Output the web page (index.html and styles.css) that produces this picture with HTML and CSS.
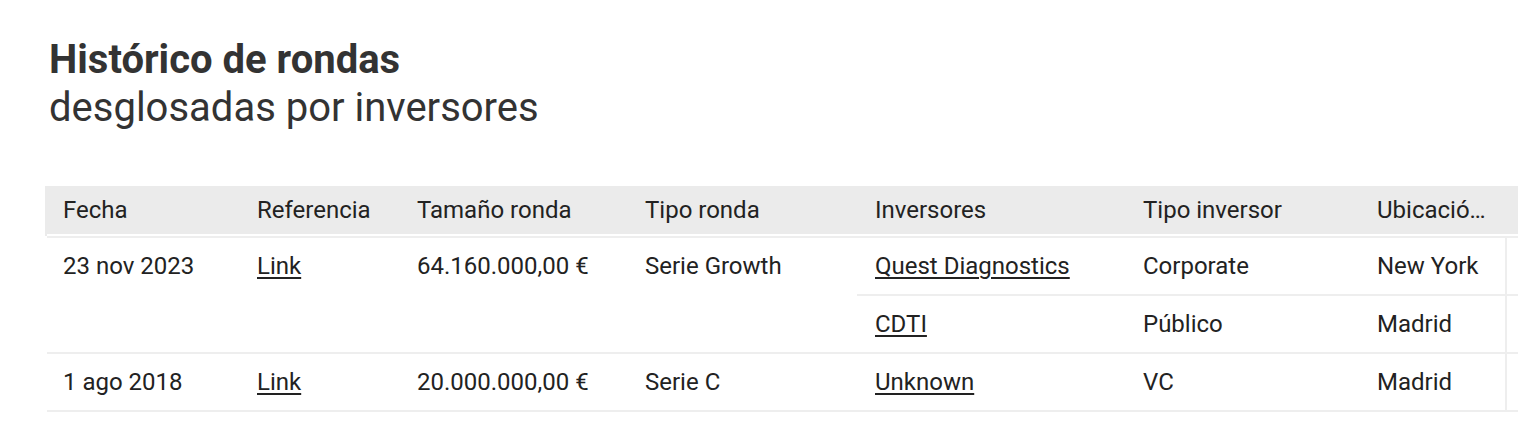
FILE: index.html
```html
<!DOCTYPE html>
<html lang="es">
<head>
<meta charset="utf-8">
<title>Histórico de rondas</title>
<link rel="stylesheet" href="styles.css">
</head>
<body>
<main class="page">
  <header class="heading">
    <h1 class="title">Histórico de rondas</h1>
    <p class="subtitle">desglosadas por inversores</p>
  </header>
  <div class="grid-wrap">
    <table class="rounds">
      <colgroup>
        <col class="c-fecha"><col class="c-ref"><col class="c-size"><col class="c-type"><col class="c-inv"><col class="c-invtype"><col class="c-loc"><col class="c-extra">
      </colgroup>
      <thead>
        <tr>
          <th class="first">Fecha</th>
          <th>Referencia</th>
          <th>Tamaño ronda</th>
          <th>Tipo ronda</th>
          <th>Inversores</th>
          <th>Tipo inversor</th>
          <th><div class="clip" title="Ubicación inversor">Ubicación inversor</div></th>
          <th></th>
        </tr>
      </thead>
      <tbody>
        <tr class="top">
          <td class="first span" rowspan="2">23 nov 2023</td>
          <td class="span" rowspan="2"><a href="#">Link</a></td>
          <td class="span" rowspan="2">64.160.000,00 €</td>
          <td class="span" rowspan="2">Serie Growth</td>
          <td><a href="#">Quest Diagnostics</a></td>
          <td>Corporate</td>
          <td class="loc">New York</td>
          <td></td>
        </tr>
        <tr>
          <td><a href="#">CDTI</a></td>
          <td>Público</td>
          <td class="loc">Madrid</td>
          <td></td>
        </tr>
        <tr>
          <td class="first">1 ago 2018</td>
          <td><a href="#">Link</a></td>
          <td>20.000.000,00 €</td>
          <td>Serie C</td>
          <td><a href="#">Unknown</a></td>
          <td>VC</td>
          <td class="loc">Madrid</td>
          <td></td>
        </tr>
      </tbody>
    </table>
  </div>
</main>
</body>
</html>
```

FILE: styles.css
```css
html, body {
  margin: 0;
  padding: 0;
  background: #ffffff;
  overflow: hidden;
}

.page {
  font-family: Roboto, "Liberation Sans", Arial, sans-serif;
  color: #333333;
  padding-top: 36px;
}

.heading {
  padding-left: 49px;
}

.title {
  margin: 0;
  font-size: 40px;
  line-height: 48px;
  font-weight: 700;
  color: #333333;
}

.subtitle {
  margin: 0;
  font-size: 40px;
  line-height: 48px;
  font-weight: 400;
  color: #333333;
}

.grid-wrap {
  margin-top: 54px;
  padding-left: 47px;
  overflow: hidden;
}

.rounds {
  border-collapse: separate;
  border-spacing: 0;
  table-layout: fixed;
  width: 1560px;
  font-size: 24px;
  color: #222222;
}

.c-fecha { width: 192px; }
.c-ref { width: 160px; }
.c-size { width: 228px; }
.c-type { width: 230px; }
.c-inv { width: 268px; }
.c-invtype { width: 234px; }
.c-loc { width: 148px; }
.c-extra { width: 100px; }

.rounds th {
  background: #ebebeb;
  height: 48px;
  padding: 0 0 0 18px;
  text-align: left;
  font-weight: 400;
  white-space: nowrap;
  border-bottom: 2px solid #ffffff;
  vertical-align: middle;
}

.rounds th.first {
  padding-left: 16px;
  box-shadow: -2px 0 0 #ebebeb;
}

.clip {
  width: 110px;
  overflow: hidden;
  text-overflow: ellipsis;
  white-space: nowrap;
}

.rounds td {
  height: 56px;
  padding: 0 0 0 18px;
  border-bottom: 2px solid #eeeeee;
  vertical-align: middle;
  white-space: nowrap;
}

.rounds tbody tr.top td {
  border-top: 2px solid #eeeeee;
}

.rounds td.first {
  padding-left: 16px;
}

.rounds td.span {
  vertical-align: top;
  padding-top: 14px;
  height: auto;
}

.rounds td.loc {
  border-right: 2px solid #eeeeee;
}

.rounds a {
  color: #222222;
  text-decoration: underline;
  text-decoration-thickness: 2px;
  text-underline-offset: 3px;
}
```
